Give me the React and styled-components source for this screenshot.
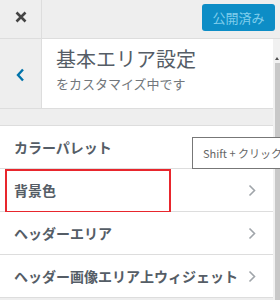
import styled, { createGlobalStyle } from "styled-components";

const Global = createGlobalStyle`
    body {
        margin: 0;
        background: #eeeeee;
        font-family: "Noto Sans CJK JP", "Noto Sans", sans-serif;
    }
`;

const Frame = styled.div`
    position: relative;
    width: 280px;
    height: 300px;
    overflow: hidden;
    background: #eeeeee;
`;

const TopBar = styled.div`
    display: flex;
    align-items: flex-start;
    height: 38px;
    border-bottom: 1px solid #dddddd;
`;

const CloseBtn = styled.div`
    width: 42px;
    height: 38px;
    border-right: 1px solid #dddddd;
    display: flex;
    align-items: center;
    justify-content: center;
    padding-bottom: 4px;
    box-sizing: border-box;
    color: #444;
`;

const Publish = styled.div`
    margin-left: auto;
    margin-right: 5px;
    margin-top: 4px;
    width: 73px;
    height: 27px;
    border-radius: 3px;
    background: #0d8dc6;
    color: #80cdec;
    font-size: 13px;
    display: flex;
    align-items: center;
    justify-content: center;
`;

const Body = styled.div`
    display: flex;
    height: 261px;
`;

const Main = styled.div`
    flex: 1;
    display: flex;
    flex-direction: column;
`;

const Header = styled.div`
    display: flex;
    height: 69px;
    border-bottom: 1px solid #dddddd;
`;

const BackBtn = styled.div`
    width: 42px;
    background: #eeeeee;
    border-right: 1px solid #dddddd;
    display: flex;
    align-items: center;
    justify-content: center;
    padding-top: 2px;
    box-sizing: border-box;
`;

const HeaderText = styled.div`
    flex: 1;
    background: #fff;
    padding: 8px 0 0 14px;
    color: #555d66;
`;

const Title = styled.div`
    font-size: 20px;
    line-height: 24px;
`;

const Sub = styled.div`
    margin-top: 4px;
    font-size: 13px;
    line-height: 18px;
    color: #72777c;
`;

const Gap = styled.div`
    height: 16px;
    border-bottom: 1px solid #dddddd;
`;

const Row = styled.div`
    position: relative;
    height: 42px;
    background: #fff;
    border-bottom: 1px solid #dddddd;
    display: flex;
    align-items: center;
    padding: 0 17px 0 14px;
    font-size: 14px;
    font-weight: bold;
    color: #555d66;
`;

const Chevron = styled.svg`
    margin-left: auto;
`;

const Highlight = styled.div`
    position: absolute;
    left: 5px;
    top: 0;
    width: 166px;
    height: 44px;
    border: 2px solid #e8262d;
    box-sizing: border-box;
`;

const Scroll = styled.div`
    width: 7px;
    background: #f1f1f1;
    display: flex;
    flex-direction: column;
    align-items: flex-end;
`;

const Arrow = styled.div`
    margin: 18px 1px 0 0;
    width: 0;
    height: 0;
    border-left: 2px solid transparent;
    border-right: 2px solid transparent;
    border-bottom: 3px solid #505050;
`;

const Thumb = styled.div`
    margin-top: 3px;
    width: 5px;
    flex: 1;
    background: #c8c8c8;
`;

const Tip = styled.div`
    position: absolute;
    left: 192px;
    top: 137px;
    width: 120px;
    height: 30px;
    background: #fff;
    border: 1px solid #777;
    color: #666;
    font-size: 11px;
    display: flex;
    align-items: center;
    padding-left: 10px;
    white-space: nowrap;
`;

const rows = [
    { label: "カラーパレット", chevron: false },
    { label: "背景色", chevron: true, marked: true },
    { label: "ヘッダーエリア", chevron: true },
    { label: "ヘッダー画像エリア上ウィジェット", chevron: true },
];

function App() {
    return (
        <Frame>
            <Global />
            <TopBar>
                <CloseBtn>
                    <svg width="12" height="12" viewBox="0 0 12 12">
                        <path d="M1.5 1.5 L10.5 10.5 M10.5 1.5 L1.5 10.5" stroke="#444" strokeWidth="2.6" />
                    </svg>
                </CloseBtn>
                <Publish>公開済み</Publish>
            </TopBar>
            <Body>
                <Main>
                    <Header>
                        <BackBtn>
                            <svg width="9" height="14" viewBox="0 0 9 14">
                                <polyline points="7,1.5 2,7 7,12.5" fill="none" stroke="#0073aa" strokeWidth="2.4" />
                            </svg>
                        </BackBtn>
                        <HeaderText>
                            <Title>基本エリア設定</Title>
                            <Sub>をカスタマイズ中です</Sub>
                        </HeaderText>
                    </Header>
                    <Gap />
                    {rows.map((r) => (
                        <Row key={r.label}>
                            {r.label}
                            {r.chevron && (
                                <Chevron width="8" height="13" viewBox="0 0 8 13">
                                    <polyline points="1.5,1.5 6.5,6.5 1.5,11.5" fill="none" stroke="#a0a5aa" strokeWidth="1.6" />
                                </Chevron>
                            )}
                            {r.marked && <Highlight />}
                        </Row>
                    ))}
                </Main>
                <Scroll>
                    <Arrow />
                    <Thumb />
                </Scroll>
            </Body>
            <Tip>Shift + クリックで</Tip>
        </Frame>
    );
}

export default App;
